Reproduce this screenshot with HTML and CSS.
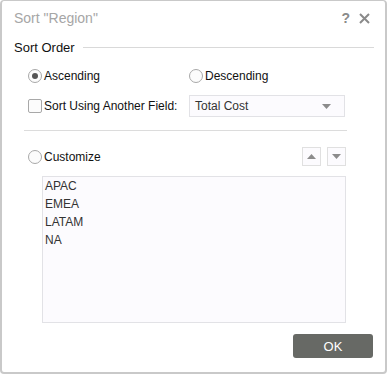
FILE: index.html
```html
<!DOCTYPE html>
<html>
<head>
<meta charset="utf-8">
<link rel="stylesheet" href="styles.css">
</head>
<body>
<div class="dialog">
  <div class="header">
    <div class="title">Sort "Region"</div>
    <div class="tools">
      <span class="help">?</span>
      <svg class="close" width="11" height="11" viewBox="0 0 11 11"><path d="M1 1L10 10M10 1L1 10" stroke="#8a8a8a" stroke-width="2"/></svg>
    </div>
  </div>
  <div class="section">
    <span class="section-label">Sort Order</span>
    <span class="section-line"></span>
  </div>
  <div class="body">
    <div class="row row-radios">
      <label class="opt opt-asc"><span class="radio checked"></span>Ascending</label>
      <label class="opt"><span class="radio"></span>Descending</label>
    </div>
    <div class="row row-field">
      <label class="opt opt-field"><span class="check"></span>Sort Using Another Field:</label>
      <div class="select">
        <span>Total Cost</span>
        <svg width="9" height="5" viewBox="0 0 9 5"><path d="M0 0H9L4.5 5Z" fill="#8c8c8c"/></svg>
      </div>
    </div>
    <div class="divider"></div>
    <div class="row row-custom">
      <label class="opt"><span class="radio"></span>Customize</label>
      <div class="arrows">
        <span class="arrow-btn"><svg width="9" height="5" viewBox="0 0 9 5"><path d="M0 5H9L4.5 0Z" fill="#8c8c8c"/></svg></span>
        <span class="arrow-btn"><svg width="9" height="5" viewBox="0 0 9 5"><path d="M0 0H9L4.5 5Z" fill="#8c8c8c"/></svg></span>
      </div>
    </div>
    <div class="list">
      <div class="item">APAC</div>
      <div class="item">EMEA</div>
      <div class="item">LATAM</div>
      <div class="item">NA</div>
    </div>
  </div>
  <div class="footer">
    <button class="ok">OK</button>
  </div>
</div>
</body>
</html>
```
FILE: styles.css
```css
html, body {
  margin: 0;
  padding: 0;
  background: #ffffff;
}
body {
  font-family: "Liberation Sans", Arial, sans-serif;
  font-size: 12px;
  color: #111111;
}
.dialog {
  box-sizing: border-box;
  width: 387px;
  height: 374px;
  border: 2px solid #c9c9c9;
  border-top-width: 1px;
  border-radius: 4px;
  background: #ffffff;
  display: flex;
  flex-direction: column;
}
.header {
  display: flex;
  align-items: center;
  justify-content: space-between;
  height: 34px;
  padding: 0 15px 0 12px;
}
.title {
  font-size: 14px;
  color: #a6a6a6;
}
.tools {
  display: flex;
  align-items: center;
  gap: 9px;
}
.help {
  font-size: 14px;
  font-weight: bold;
  color: #8a8a8a;
}
.section {
  display: flex;
  align-items: center;
  padding: 4px 11px 0 12px;
  height: 16px;
}
.section-label {
  font-size: 13px;
  color: #111;
}
.section-line {
  flex: 1;
  height: 1px;
  background: #d9d9d9;
  margin-left: 8px;
}
.body {
  padding: 0 0 0 26px;
  flex: 1;
}
.row {
  display: flex;
  align-items: center;
}
.row-radios {
  margin-top: 12px;
  height: 18px;
}
.opt {
  display: flex;
  align-items: center;
}
.opt-asc {
  width: 161px;
}
.radio {
  box-sizing: border-box;
  width: 14px;
  height: 14px;
  border: 1px solid #a8a8a8;
  border-radius: 50%;
  background: #fcfcfc;
  margin-right: 2px;
  display: flex;
  align-items: center;
  justify-content: center;
}
.radio.checked::after {
  content: "";
  width: 6px;
  height: 6px;
  border-radius: 50%;
  background: #555555;
}
.check {
  box-sizing: border-box;
  width: 14px;
  height: 14px;
  border: 1px solid #a8a8a8;
  border-radius: 2px;
  background: #fcfcfc;
  margin-right: 2px;
}
.row-field {
  margin-top: 10px;
}
.opt-field {
  width: 161px;
}
.select {
  box-sizing: border-box;
  width: 156px;
  height: 22px;
  border: 1px solid #e2e2e6;
  background: #fcfbfe;
  display: flex;
  align-items: center;
  justify-content: space-between;
  padding: 0 13px 0 5px;
  color: #333;
}
.divider {
  height: 1px;
  background: #dcdcdc;
  width: 323px;
  margin: 13px 0 0 -4px;
}
.row-custom {
  margin-top: 16px;
  width: 318px;
  justify-content: space-between;
}
.arrows {
  display: flex;
  gap: 6px;
}
.arrow-btn {
  box-sizing: border-box;
  width: 19px;
  height: 19px;
  border: 1px solid #e0e0e0;
  background: #fcfbfe;
  display: flex;
  align-items: center;
  justify-content: center;
}
.list {
  box-sizing: border-box;
  width: 304px;
  height: 147px;
  margin: 10px 0 0 14px;
  border: 1px solid #e2e2e6;
  background: #fcfbfe;
  padding: 0 2px;
  color: #333;
}
.item {
  height: 18px;
  line-height: 18px;
}
.footer {
  display: flex;
  justify-content: flex-end;
  padding: 0 12px 14px 0;
}
.ok {
  width: 80px;
  height: 24px;
  border: 0;
  border-radius: 3px;
  background: #676965;
  color: #ffffff;
  font-family: "Liberation Sans", Arial, sans-serif;
  font-size: 13px;
  padding: 0;
}
```
